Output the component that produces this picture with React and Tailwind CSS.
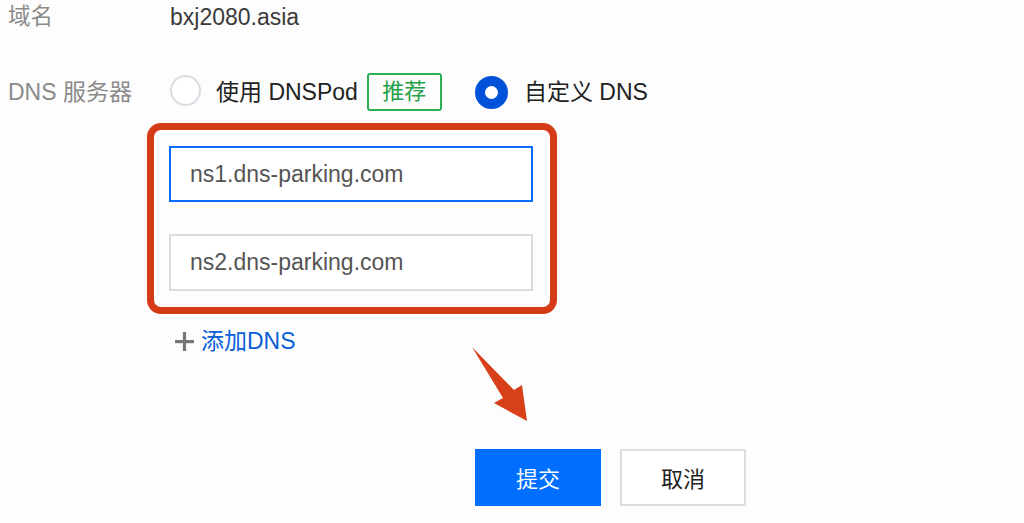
import React from "react";

export default function App() {
  return (
    <div
      className="relative w-[1024px] h-[523px] overflow-hidden bg-[#fdfdfd] text-[23px] leading-none"
      style={{ fontFamily: '"Liberation Sans", "Noto Sans CJK SC", sans-serif' }}
    >
      {/* Row 1 */}
      <div className="flex items-center h-[34px]">
        <div className="w-[170px] pl-[8px] text-[#8a8a8a] text-[22.5px]">域名</div>
        <div className="text-[#3a3a3a]">bxj2080.asia</div>
      </div>

      {/* Row 2 */}
      <div className="flex items-center h-[38px] mt-[39px]">
        <div className="w-[170px] pl-[8px] text-[#8a8a8a] text-[23px] whitespace-nowrap">DNS 服务器</div>
        <div className="flex items-center">
          <div className="w-[31px] h-[31px] rounded-full border-[2px] border-[#d9dde3] bg-white -mt-[3px]" />
          <div className="ml-[15px] text-[#222]">使用 DNSPod</div>
          <div className="ml-[9px] w-[75px] h-[38px] flex items-center justify-center border-[2px] border-[#2cb052] rounded-[3px] text-[#23a146] text-[22px]">
            推荐
          </div>
          <div className="ml-[33px] w-[33px] h-[33px] rounded-full border-[10px] border-[#0052d9] bg-white" />
          <div className="ml-[16px] text-[#222]">自定义 DNS</div>
        </div>
      </div>

      {/* Red highlighted inputs */}
      <div className="ml-[147px] mt-[12px] w-[410px] h-[191px] border-[7px] border-[#d63b17] rounded-[14px] pt-[16px] pl-[15px] pr-[17px] flex flex-col gap-[32px]">
        <div className="h-[56px] border-[2px] border-[#0a6cff] flex items-center pl-[19px] text-[#555] bg-white">
          ns1.dns-parking.com
        </div>
        <div className="h-[57px] border-[2px] border-[#dcdcdc] flex items-center pl-[19px] text-[#555] bg-white">
          ns2.dns-parking.com
        </div>
      </div>

      {/* Add DNS */}
      <div className="flex items-center h-[28px] mt-[13px] ml-[175px]">
        <svg width="19" height="19" viewBox="0 0 19 19">
          <rect x="0" y="8" width="19" height="3.2" fill="#777" />
          <rect x="7.9" y="0" width="3.2" height="19" fill="#777" />
        </svg>
        <span className="ml-[7px] text-[#0b5fd8]">添加DNS</span>
      </div>

      {/* Buttons */}
      <div className="flex mt-[94px] ml-[475px] gap-[19px]">
        <div className="w-[126px] h-[57px] bg-[#006eff] text-white flex items-center justify-center pt-[4px] text-[22px]">
          提交
        </div>
        <div className="w-[126px] h-[57px] border-[2px] border-[#dddddd] bg-white text-[#222] flex items-center justify-center pt-[4px] text-[22px]">
          取消
        </div>
      </div>

      {/* Arrow annotation */}
      <svg className="absolute left-0 top-0 pointer-events-none" width="1024" height="523">
        <polygon
          points="472,347 514,390 522,385 527,421 494,403 503,398"
          fill="#d8401a"
        />
      </svg>
    </div>
  );
}
